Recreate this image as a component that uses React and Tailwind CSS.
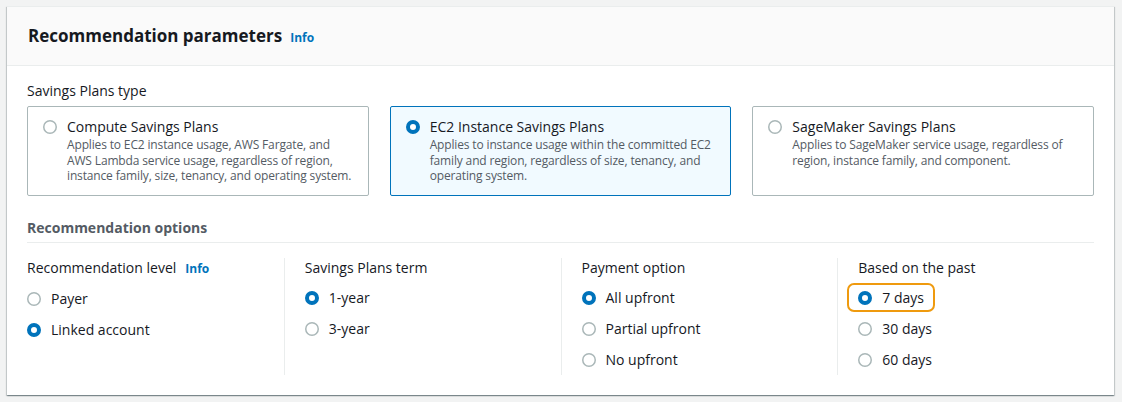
import React from "react";

const font = { fontFamily: '"Open Sans", "Noto Sans", Arial, sans-serif' };

function Radio({ checked }) {
  return checked ? (
    <svg width="14" height="14" viewBox="0 0 14 14" className="shrink-0">
      <circle cx="7" cy="7" r="5" fill="#ffffff" stroke="#0073bb" strokeWidth="4" />
    </svg>
  ) : (
    <svg width="14" height="14" viewBox="0 0 14 14" className="shrink-0">
      <circle cx="7" cy="7" r="6.25" fill="#ffffff" stroke="#aab7b8" strokeWidth="1.5" />
    </svg>
  );
}

function Tile({ title, desc, checked }) {
  return (
    <div
      className={
        "flex gap-[10px] rounded-[2px] border pl-[15px] pr-3 pt-[10px] pb-3 h-[90px] " +
        (checked ? "border-[#0073bb] bg-[#f1faff]" : "border-[#aab7b8] bg-white")
      }
    >
      <div className="pt-[3px]">
        <Radio checked={checked} />
      </div>
      <div>
        <div className="text-[14px] leading-[20px] text-[#16191f]">{title}</div>
        <div className="text-[12px] leading-[15.5px] tracking-[-0.15px] text-[#545b64]">{desc}</div>
      </div>
    </div>
  );
}

function Option({ label, checked, highlight }) {
  return (
    <div className="relative flex w-fit items-center gap-[10px] h-5">
      <Radio checked={checked} />
      <span className="text-[14px] leading-[20px] text-[#16191f]">{label}</span>
      {highlight && (
        <span className="pointer-events-none absolute -left-[11px] -right-[11px] -top-[5px] -bottom-[4px] rounded-[7px] border-2 border-[#ef9a0e]" />
      )}
    </div>
  );
}

function Column({ label, info, options, border }) {
  return (
    <div className={"px-5 pb-[5px] " + (border ? "border-l border-[#eaeded]" : "")}>
      <div className="flex items-baseline gap-[9px] text-[14px] leading-[20px] text-[#16191f]">
        {label}
        {info && <span className="text-[12px] font-bold text-[#0073bb]">Info</span>}
      </div>
      <div className="mt-[10px] flex flex-col gap-[11px]">
        {options.map((o) => (
          <Option key={o.label} {...o} />
        ))}
      </div>
    </div>
  );
}

export default function App() {
  return (
    <div className="min-h-[402px] bg-[#f2f3f3] pt-[6px] pb-[6px] pl-[7px] pr-[8px]" style={font}>
      <div className="border-t border-[#eaeded] bg-white shadow-[0_1px_1px_0_rgba(0,28,36,0.3),1px_1px_1px_0_rgba(0,28,36,0.15),-1px_1px_1px_0_rgba(0,28,36,0.15)]">
        <div className="flex items-baseline gap-[8px] border-b border-[#eaeded] bg-[#fafafa] pl-[21px] pr-5 py-[18px]">
          <h2 className="text-[17px] font-bold leading-[22px] text-[#16191f]">Recommendation parameters</h2>
          <span className="text-[12px] font-bold text-[#0073bb]">Info</span>
        </div>
        <div className="px-5 pt-[15px] pb-5">
          <div className="text-[14px] leading-[20px] text-[#16191f]">Savings Plans type</div>
          <div className="mt-[5px] grid grid-cols-3 gap-[21px]">
            <Tile
              title="Compute Savings Plans"
              desc="Applies to EC2 instance usage, AWS Fargate, and AWS Lambda service usage, regardless of region, instance family, size, tenancy, and operating system."
            />
            <Tile
              checked
              title="EC2 Instance Savings Plans"
              desc="Applies to instance usage within the committed EC2 family and region, regardless of size, tenancy, and operating system."
            />
            <Tile
              title="SageMaker Savings Plans"
              desc="Applies to SageMaker service usage, regardless of region, instance family, and component."
            />
          </div>
          <div className="mt-[22px] border-b border-[#eaeded] pb-1 text-[14px] font-bold leading-[20px] text-[#545b64]">
            Recommendation options
          </div>
          <div className="-mx-5 mt-[15px] grid grid-cols-4">
            <Column
              label="Recommendation level"
              info
              options={[{ label: "Payer" }, { label: "Linked account", checked: true }]}
            />
            <Column
              border
              label="Savings Plans term"
              options={[{ label: "1-year", checked: true }, { label: "3-year" }]}
            />
            <Column
              border
              label="Payment option"
              options={[
                { label: "All upfront", checked: true },
                { label: "Partial upfront" },
                { label: "No upfront" },
              ]}
            />
            <Column
              border
              label="Based on the past"
              options={[
                { label: "7 days", checked: true, highlight: true },
                { label: "30 days" },
                { label: "60 days" },
              ]}
            />
          </div>
        </div>
      </div>
    </div>
  );
}
